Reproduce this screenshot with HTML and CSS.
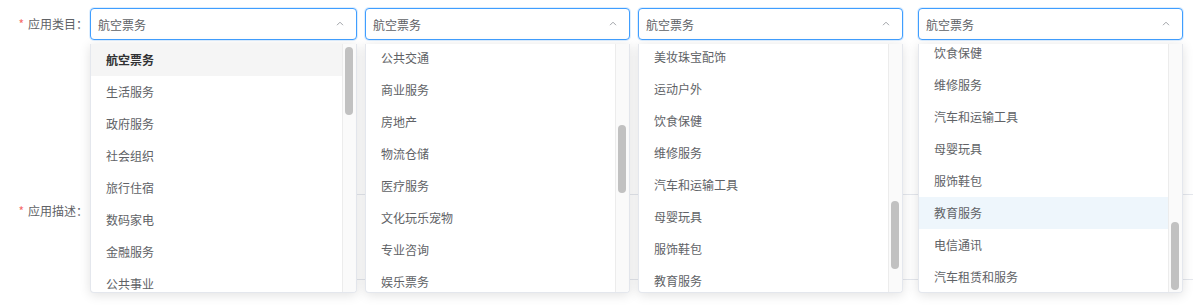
FILE: index.html
```html
<!DOCTYPE html>
<html lang="zh-CN">
<head>
<meta charset="utf-8">
<link rel="stylesheet" href="styles.css">
</head>
<body>
<div class="form">
  <div class="row row-cat">
    <label class="label"><span class="req">*</span>应用类目：</label>
    <div class="selects">
      <div class="select s1">
        <div class="input"><span>航空票务</span><svg class="arrow" width="8" height="5" viewBox="0 0 8 5"><path d="M1 4.2 L4 1.2 L7 4.2" fill="none" stroke="#a0a3a8" stroke-width="1"/></svg></div>
        <div class="dropdown">
          <div class="list" style="margin-top:0px">
            <div class="item selected">航空票务</div>
            <div class="item">生活服务</div>
            <div class="item">政府服务</div>
            <div class="item">社会组织</div>
            <div class="item">旅行住宿</div>
            <div class="item">数码家电</div>
            <div class="item">金融服务</div>
            <div class="item">公共事业</div>
          </div>
          <div class="track"><div class="thumb" style="margin-top:3px"></div></div>
        </div>
      </div>
      <div class="select s2">
        <div class="input"><span>航空票务</span><svg class="arrow" width="8" height="5" viewBox="0 0 8 5"><path d="M1 4.2 L4 1.2 L7 4.2" fill="none" stroke="#a0a3a8" stroke-width="1"/></svg></div>
        <div class="dropdown">
          <div class="list" style="margin-top:-2px">
            <div class="item">公共交通</div>
            <div class="item">商业服务</div>
            <div class="item">房地产</div>
            <div class="item">物流仓储</div>
            <div class="item">医疗服务</div>
            <div class="item">文化玩乐宠物</div>
            <div class="item">专业咨询</div>
            <div class="item">娱乐票务</div>
          </div>
          <div class="track"><div class="thumb" style="margin-top:81px"></div></div>
        </div>
      </div>
      <div class="select s3">
        <div class="input"><span>航空票务</span><svg class="arrow" width="8" height="5" viewBox="0 0 8 5"><path d="M1 4.2 L4 1.2 L7 4.2" fill="none" stroke="#a0a3a8" stroke-width="1"/></svg></div>
        <div class="dropdown">
          <div class="list" style="margin-top:-3px">
            <div class="item">美妆珠宝配饰</div>
            <div class="item">运动户外</div>
            <div class="item">饮食保健</div>
            <div class="item">维修服务</div>
            <div class="item">汽车和运输工具</div>
            <div class="item">母婴玩具</div>
            <div class="item">服饰鞋包</div>
            <div class="item">教育服务</div>
          </div>
          <div class="track"><div class="thumb" style="margin-top:157px"></div></div>
        </div>
      </div>
      <div class="select s4">
        <div class="input"><span>航空票务</span><svg class="arrow" width="8" height="5" viewBox="0 0 8 5"><path d="M1 4.2 L4 1.2 L7 4.2" fill="none" stroke="#a0a3a8" stroke-width="1"/></svg></div>
        <div class="dropdown">
          <div class="list" style="margin-top:-7px">
            <div class="item">饮食保健</div>
            <div class="item">维修服务</div>
            <div class="item">汽车和运输工具</div>
            <div class="item">母婴玩具</div>
            <div class="item">服饰鞋包</div>
            <div class="item hover">教育服务</div>
            <div class="item">电信通讯</div>
            <div class="item">汽车租赁和服务</div>
          </div>
          <div class="track"><div class="thumb" style="margin-top:178px"></div></div>
        </div>
      </div>
    </div>
  </div>
  <div class="row row-desc">
    <label class="label"><span class="req">*</span>应用描述：</label>
    <div class="textarea"></div>
  </div>
</div>
</body>
</html>
```

FILE: styles.css
```css
* { box-sizing: border-box; }
html, body {
  margin: 0;
  padding: 0;
  background: #fff;
  width: 1193px;
  height: 308px;
  overflow: hidden;
  font-family: "Noto Sans CJK SC", "Noto Sans", sans-serif;
  font-size: 12px;
  color: #606266;
}
.form {
  padding-top: 8px;
}
.row {
  display: flex;
  align-items: flex-start;
}
.label {
  width: 90px;
  flex: none;
  text-align: right;
  padding-right: 2px;
  line-height: 32px;
  color: #606266;
  white-space: nowrap;
}
.req {
  color: #f56c6c;
  margin-right: 4px;
}
.selects {
  display: flex;
  position: relative;
  z-index: 2;
}
.select {
  position: relative;
  width: 265px;
  margin-right: 8px;
}
.select.s1 { width: 267px; }
.select.s3 { margin-right: 15px; }
.input {
  height: 32px;
  border: 1px solid #409eff;
  border-radius: 4px;
  box-shadow: 0 0 0 1px rgba(64, 158, 255, 0.18);
  display: flex;
  align-items: center;
  justify-content: space-between;
  padding: 0 12px 0 7px;
  color: #606266;
  background: #fff;
}
.arrow { display: block; margin-top: -1px; }
.dropdown {
  position: absolute;
  left: 0;
  right: 0;
  top: 36px;
  height: 249px;
  background: #fff;
  border: 1px solid #e4e7ed;
  border-top: none;
  border-radius: 0 0 4px 4px;
  box-shadow: 0 2px 12px rgba(0, 0, 0, 0.12);
  display: flex;
  overflow: hidden;
}
.list {
  flex: 1;
  min-width: 0;
}
.item {
  height: 32px;
  line-height: 32px;
  padding: 0 15px;
  color: #606266;
  white-space: nowrap;
}
.item.selected {
  background: #f5f5f5;
  color: #303133;
  font-weight: 700;
}
.item.hover {
  background: #eef6fc;
}
.track {
  width: 14px;
  flex: none;
  background: #fafafa;
  border-left: 1px solid #ececec;
  padding-left: 2px;
}
.thumb {
  width: 8px;
  height: 68px;
  border-radius: 4px;
  background: #c1c1c1;
}
.row-desc {
  margin-top: 154px;
}
.label + .textarea { }
.row-desc .label { line-height: 34px; }
.textarea {
  width: 1110px;
  height: 86px;
  border: 1px solid #e4e7ed;
  border-radius: 4px;
  flex: none;
}
```
